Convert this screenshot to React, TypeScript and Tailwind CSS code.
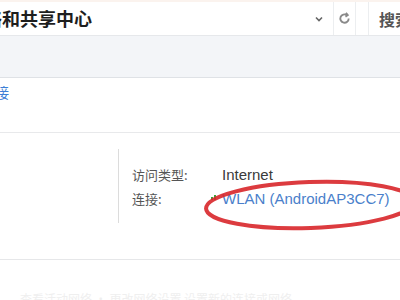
import React from 'react';

const cjk = { fontFamily: '"Segoe UI", "Noto Sans CJK SC", "Liberation Sans", sans-serif' };

function Header() {
  return (
    <div className="flex h-[34px] items-center border-b border-[#e6e8eb] bg-white">
      <div className="-ml-[34px] flex-1 whitespace-nowrap text-[18px] font-bold text-[#1e1e1e]" style={cjk}>
        网络和共享中心
      </div>
      <svg className="mr-[10px] h-[8px] w-[8px] text-[#666]" viewBox="0 0 8 8" fill="none" stroke="currentColor" strokeWidth="1.6">
        <path d="M1 2.5 L4 5.5 L7 2.5" />
      </svg>
      <div className="flex h-full w-[23px] items-center justify-center border-x border-[#eceef0]">
        <svg className="h-[13px] w-[13px] text-[#8a8a8a]" viewBox="0 0 14 14" fill="none" stroke="currentColor" strokeWidth="2">
          <path d="M11.5 7 A4.5 4.5 0 1 1 9.5 3.3" />
          <path d="M8.5 1 L10.5 3.4 L8 5" />
        </svg>
      </div>
      <div className="ml-[12px] flex h-full w-[32px] items-center overflow-hidden border-l border-[#eceef0] pl-[10px]">
        <span className="whitespace-nowrap text-[16px] font-bold text-[#555]" style={cjk}>
          搜索
        </span>
      </div>
    </div>
  );
}

function InfoRow({ label, children }: { label: string; children: React.ReactNode }) {
  return (
    <div className="flex h-[24px] items-center">
      <div className="w-[90px] text-[13px] text-[#555]" style={cjk}>
        {label}
      </div>
      {children}
    </div>
  );
}

export default function App() {
  return (
    <div className="relative h-[300px] w-[400px] overflow-hidden bg-white" style={cjk}>
      <div className="h-[2px] bg-[#fbf3ee]" />
      <Header />
      <div className="h-[42px] border-b border-[#dfe2e6] bg-[#f3f5f8]" />
      <div className="h-[55px] border-b border-[#e8e9eb] pt-[4px]">
        <div className="-ml-[5px] text-[14px] text-[#3d7fd6]">接</div>
      </div>
      <div className="flex h-[127px] border-b border-[#e6e7e9]">
        <div className="w-[118px] shrink-0" />
        <div className="mt-[16px] h-[74px] border-l border-[#dcdcdc]" />
        <div className="flex flex-col pl-[13px] pt-[30px]">
          <InfoRow label="访问类型:">
            <span className="text-[15px] text-[#3a3a3a]" style={{ fontFamily: '"Liberation Sans", sans-serif' }}>
              Internet
            </span>
          </InfoRow>
          <InfoRow label="连接:">
            <div className="relative flex items-center">
              <svg className="absolute -left-[11px] top-[6px] h-[6px] w-[6px]" viewBox="0 0 6 6">
                <rect x="0" y="3" width="2" height="3" fill="#3aa53a" />
                <rect x="3" y="1" width="2" height="5" fill="#3aa53a" />
              </svg>
              <span className="whitespace-nowrap text-[15px] text-[#4a7fcb]" style={{ fontFamily: '"Liberation Sans", sans-serif' }}>
                WLAN (AndroidAP3CC7)
              </span>
            </div>
          </InfoRow>
        </div>
      </div>
      <div className="pt-[30px] pl-[20px] text-[12px] text-[#efefef] whitespace-nowrap">
        查看活动网络 · 更改网络设置 设置新的连接或网络
      </div>
      <svg className="pointer-events-none absolute left-0 top-0 h-[300px] w-[400px]" viewBox="0 0 400 300" fill="none">
        <ellipse cx="310" cy="205" rx="104" ry="23" stroke="#d8262a" strokeWidth="4" transform="rotate(-2 310 205)" opacity="0.9" />
      </svg>
    </div>
  );
}
